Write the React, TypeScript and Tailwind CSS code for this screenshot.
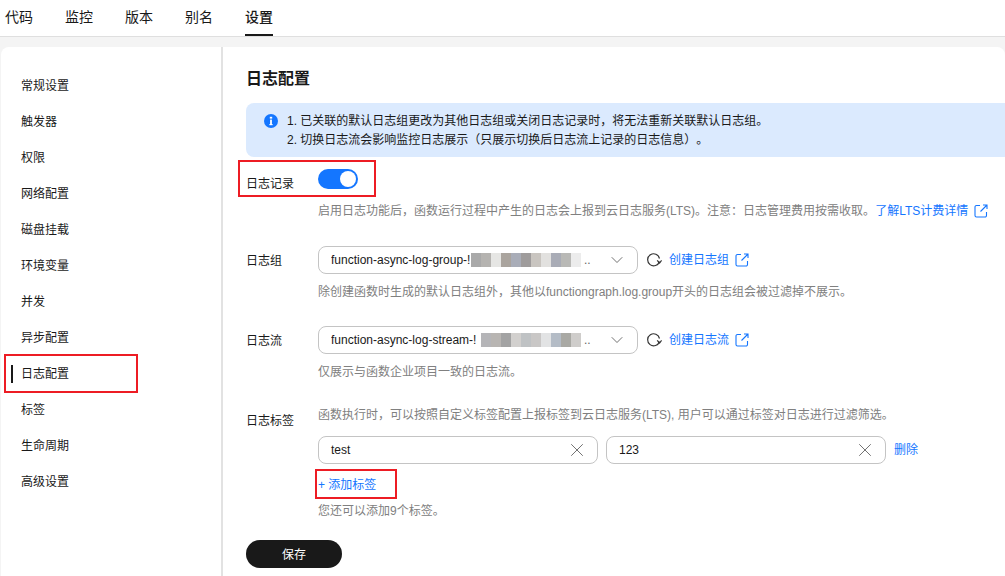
import { ChevronDown, X } from "lucide-react";

const tabs = ["代码", "监控", "版本", "别名", "设置"];
const menu = ["常规设置", "触发器", "权限", "网络配置", "磁盘挂载", "环境变量", "并发", "异步配置", "日志配置", "标签", "生命周期", "高级设置"];
const groupBlur = ["#a9a9a9", "#b5b3b0", "#e6e6e4", "#aaa49e", "#a9adb8", "#9f9c9c", "#c9c5c0", "#e2e1df", "#a9acb6", "#b9b9b6", "#ececec"];
const streamBlur = ["#b5b5b8", "#b8b5b2", "#a3a3a3", "#d2d0ce", "#bfc2c4", "#c9c7c6", "#e2e3e4", "#b4bcc6", "#a9a9a4", "#cfcdcb"];

function Blur({ colors }: { colors: string[] }) {
  return (
    <span className="flex h-[14px] shrink-0">
      {colors.map((c, i) => (
        <span key={i} className="h-full w-[10px]" style={{ backgroundColor: c }} />
      ))}
    </span>
  );
}

function LogSelect({ prefix, prefixClass, colors }: { prefix: string; prefixClass: string; colors: string[] }) {
  return (
    <div className="flex h-[28px] w-[320px] items-center rounded-[8px] border border-[#c4c4c4] pl-3 pr-[10px] text-[#191919]">
      <span className={"overflow-hidden whitespace-nowrap " + prefixClass}>{prefix}</span>
      <Blur colors={colors} />
      <span className="ml-[3px] flex-1 text-[#666]">..</span>
      <ChevronDown size={20} strokeWidth={1} className="text-[#555]" />
    </div>
  );
}

function ExternalIcon() {
  return (
    <svg viewBox="0 0 14 14" fill="none" stroke="currentColor" strokeWidth="1.1" className="ml-[6px] h-[14px] w-[14px] shrink-0">
      <path d="M6 1.5H2.5A1.5 1.5 0 0 0 1 3v8.5A1.5 1.5 0 0 0 2.5 13H11a1.5 1.5 0 0 0 1.5-1.5V8" />
      <path d="M6.5 7.5 13 1M9 1h4v4" />
    </svg>
  );
}

function RefreshIcon() {
  return (
    <svg viewBox="0 0 16 16" fill="none" stroke="#333" strokeWidth="1.2" className="ml-[8px] mr-[7px] h-[16px] w-[16px] shrink-0">
      <path d="M13.4 9.5A6 6 0 1 1 13.5 6.5" />
      <path d="M11.2 8.4 13.6 11 15.6 8.4" />
    </svg>
  );
}

function LinkOut({ text }: { text: string }) {
  return (
    <span className="flex items-center text-[#1476ff]">
      {text}
      <ExternalIcon />
    </span>
  );
}

function Row({ label, labelClass, className, children }: { label: string; labelClass: string; className?: string; children: React.ReactNode }) {
  return (
    <div className={"flex " + (className ?? "")}>
      <div className={"w-[72px] shrink-0 text-[#191919] " + labelClass}>{label}</div>
      <div className="min-w-0 flex-1">{children}</div>
    </div>
  );
}

function TagInput({ value }: { value: string }) {
  return (
    <div className="flex h-[28px] w-[280px] items-center justify-between rounded-[8px] border border-[#c4c4c4] pl-3 pr-[9px] text-[#191919]">
      <span>{value}</span>
      <X size={22} strokeWidth={1} className="text-[#666]" />
    </div>
  );
}

export default function App() {
  return (
    <div className="relative h-[576px] w-[1005px] overflow-hidden bg-[#f4f4f4] text-[12px] leading-[18px] [text-spacing-trim:space-all] font-['Liberation_Sans','Noto_Sans_CJK_SC',sans-serif]">
      {/* Tabs */}
      <div className="flex h-[37px] gap-[32px] border-b border-[#dfdfdf] bg-white pl-[5px] text-[14px] text-[#191919]">
        {tabs.map((t) => (
          <div key={t} className={"relative pt-[8px] " + (t === "设置" ? "font-medium" : "")}>
            {t}
            {t === "设置" && <span className="absolute bottom-0 left-0 h-[2px] w-full bg-[#191919]" />}
          </div>
        ))}
      </div>

      <div className="ml-px mt-[10px] flex h-[529px] overflow-hidden rounded-t-[8px] bg-white">
        {/* Side menu */}
        <div className="w-[222px] shrink-0 border-r-2 border-[#e2e2e2] pt-[21px]">
          {menu.map((m) => (
            <div key={m} className="relative flex h-[36px] items-center pl-[20px] text-[#191919]">
              {m}
              {m === "日志配置" && <span className="absolute left-[10px] top-[9px] h-[18px] w-[2px] bg-[#191919]" />}
            </div>
          ))}
        </div>

        {/* Form */}
        <div className="min-w-0 flex-1 pl-[23px]">
          <h2 className="mt-[22px] text-[16px] font-semibold leading-[20px] text-[#191919]">日志配置</h2>

          <div className="mt-[14px] flex h-[54px] gap-[9px] rounded-l-[8px] bg-[#dbeafe] pl-[18px] pt-[8px] leading-[19px] text-[#191919]">
            <svg viewBox="0 0 14 14" className="mt-[3px] h-[14px] w-[14px] shrink-0">
              <circle cx="7" cy="7" r="7" fill="#1476ff" />
              <rect x="5.8" y="2.8" width="2.4" height="1.8" fill="#fff" />
              <rect x="6.1" y="5.6" width="1.8" height="4.6" fill="#fff" />
              <rect x="5.4" y="10" width="3.2" height="1.2" fill="#fff" />
            </svg>
            <div className="pt-px">
              <p>1. 已关联的默认日志组更改为其他日志组或关闭日志记录时，将无法重新关联默认日志组。</p>
              <p>2. 切换日志流会影响监控日志展示（只展示切换后日志流上记录的日志信息）。</p>
            </div>
          </div>

          <Row label="日志记录" labelClass="pt-[6px]" className="mt-[12px]">
            <div className="flex h-[20px] w-[40px] items-center justify-end rounded-full bg-[#1476ff] pr-[2px]">
              <span className="h-[16px] w-[16px] rounded-full bg-white" />
            </div>
            <p className="mt-[13px] flex items-center whitespace-nowrap text-[#808080]">
              启用日志功能后，函数运行过程中产生的日志会上报到云日志服务(LTS)。注意：日志管理费用按需收取。
              <LinkOut text="了解LTS计费详情" />
            </p>
          </Row>

          <Row label="日志组" labelClass="pt-[6px]" className="mt-[26px]">
            <div className="flex items-center">
              <LogSelect prefix="function-async-log-group-!" prefixClass="w-[140px]" colors={groupBlur} />
              <RefreshIcon />
              <LinkOut text="创建日志组" />
            </div>
            <p className="mt-[9px] whitespace-nowrap text-[#808080]">除创建函数时生成的默认日志组外，其他以functiongraph.log.group开头的日志组会被过滤掉不展示。</p>
          </Row>

          <Row label="日志流" labelClass="pt-[6px]" className="mt-[25px]">
            <div className="flex items-center">
              <LogSelect prefix="function-async-log-stream-!" prefixClass="w-[150px]" colors={streamBlur} />
              <RefreshIcon />
              <LinkOut text="创建日志流" />
            </div>
            <p className="mt-[9px] whitespace-nowrap text-[#808080]">仅展示与函数企业项目一致的日志流。</p>
          </Row>

          <Row label="日志标签" labelClass="pt-[6px]" className="mt-[25px]">
            <p className="whitespace-nowrap text-[#808080]">函数执行时，可以按照自定义标签配置上报标签到云日志服务(LTS), 用户可以通过标签对日志进行过滤筛选。</p>
            <div className="mt-[12px] flex items-center gap-[8px]">
              <TagInput value="test" />
              <TagInput value="123" />
              <span className="text-[#1476ff]">删除</span>
            </div>
            <p className="mt-[12px] text-[#1476ff]">+ 添加标签</p>
            <p className="mt-[8px] text-[#808080]">您还可以添加9个标签。</p>
          </Row>

          <button className="mt-[20px] h-[28px] w-[96px] rounded-full bg-[#191919] pt-px text-white">保存</button>
        </div>
      </div>

      {/* Red annotation boxes */}
      <div className="absolute left-[238px] top-[160px] h-[37px] w-[138px] border-2 border-[#ed1c24]" />
      <div className="absolute left-[4px] top-[354px] h-[39px] w-[134px] border-2 border-[#ed1c24]" />
      <div className="absolute left-[315px] top-[469px] h-[30px] w-[82px] border-2 border-[#ed1c24]" />
    </div>
  );
}
